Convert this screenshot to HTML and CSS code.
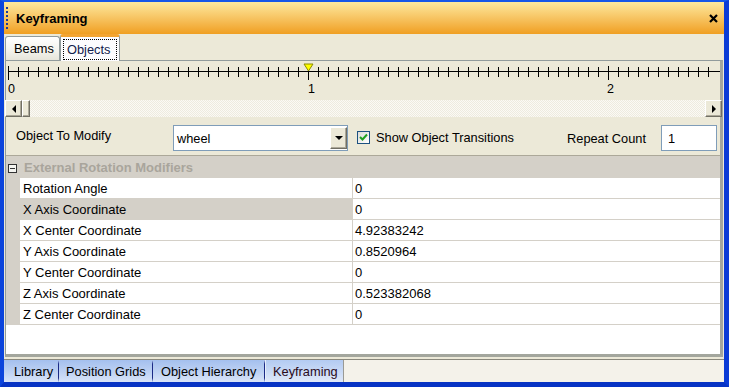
FILE: index.html
```html
<!DOCTYPE html>
<html lang="en">
<head>
  <meta charset="UTF-8">
  <meta name="viewport" content="width=device-width, initial-scale=1.0">
  <title>Keyframing</title>
  <link rel="stylesheet" href="styles.css">
</head>
<body>
  <div class="window">
    <div class="titlebar">
      <span class="grip"></span>
      <span class="title">Keyframing</span>
      <svg class="close" width="9" height="9" viewBox="0 0 9 9"><path d="M1 1 L8 8 M8 1 L1 8" stroke="#000" stroke-width="2.2"/></svg>
    </div>

    <div class="body">
      <div class="tabs">
        <div class="tab">Beams</div>
        <div class="tab active"><span class="focus">Objects</span></div>
      </div>

      <div class="page">
        <!-- timeline ruler -->
        <svg class="ruler" width="714" height="39" viewBox="0 0 714 39" shape-rendering="crispEdges">
          <defs>
            <pattern id="tick" x="2" y="6" width="10" height="10" patternUnits="userSpaceOnUse">
              <rect x="0" y="0" width="1" height="10" fill="#000"/>
            </pattern>
          </defs>
          <rect x="2" y="10" width="712" height="1" fill="#000"/>
          <rect x="2" y="6" width="701" height="10" fill="url(#tick)"/>
          <rect x="2" y="5" width="1" height="14" fill="#000"/>
          <rect x="302" y="5" width="1" height="14" fill="#000"/>
          <rect x="602" y="5" width="1" height="14" fill="#000"/>
          <text class="rlabel" x="2" y="32">0</text>
          <text class="rlabel" x="302" y="32">1</text>
          <text class="rlabel" x="601" y="32">2</text>
          <polygon points="298,3 307,3 302.5,10" fill="#ffff00" stroke="#8a8a00" stroke-width="1" shape-rendering="auto"/>
        </svg>

        <div class="hscroll">
          <div class="sbtn"><span class="arrow-left"></span></div>
          <div class="thumb"></div>
          <div class="track"></div>
          <div class="sbtn"><span class="arrow-right"></span></div>
        </div>

        <div class="options">
          <span class="opt-label">Object To Modify</span>
          <div class="combo">
            <span class="combo-text">wheel</span>
            <span class="combo-btn"><span class="arrow-down"></span></span>
          </div>
          <label class="check">
            <span class="box">
              <svg width="9" height="9" viewBox="0 0 9 9"><path d="M1 4 L3.5 6.5 L8 1.5" fill="none" stroke="#21a121" stroke-width="2"/></svg>
            </span>
            Show Object Transitions
          </label>
          <span class="repeat-label">Repeat Count</span>
          <div class="textbox">1</div>
        </div>

        <div class="grid">
          <div class="category">
            <span class="toggle"></span>
            <span class="cat-text">External Rotation Modifiers</span>
          </div>
          <div class="row"><span class="margin"></span><span class="name">Rotation Angle</span><span class="value">0</span></div>
          <div class="row"><span class="margin"></span><span class="name selected">X Axis Coordinate</span><span class="value">0</span></div>
          <div class="row"><span class="margin"></span><span class="name">X Center Coordinate</span><span class="value">4.92383242</span></div>
          <div class="row"><span class="margin"></span><span class="name">Y Axis Coordinate</span><span class="value">0.8520964</span></div>
          <div class="row"><span class="margin"></span><span class="name">Y Center Coordinate</span><span class="value">0</span></div>
          <div class="row"><span class="margin"></span><span class="name">Z Axis Coordinate</span><span class="value">0.523382068</span></div>
          <div class="row"><span class="margin"></span><span class="name">Z Center Coordinate</span><span class="value">0</span></div>
          <div class="filler"></div>
        </div>
      </div>

      <div class="bottombar">
        <div class="btab lib">Library</div>
        <span class="sep"></span>
        <div class="btab grids">Position Grids</div>
        <span class="sep"></span>
        <div class="btab hier">Object Hierarchy</div>
        <span class="sep"></span>
        <div class="btab key">Keyframing</div>
      </div>
    </div>
  </div>
</body>
</html>
```

FILE: styles.css
```css
html, body {
  margin: 0;
  padding: 0;
}

body {
  font-family: "Liberation Sans", Arial, sans-serif;
  font-size: 12.8px;
  color: #000;
  background: #0a40dc;
}

.window {
  width: 729px;
  height: 387px;
  box-sizing: border-box;
  border-style: solid;
  border-width: 2px 5px 5px 4px;
  border-color: #1657e8 #0a3bd6 #0733c4 #0b44dc;
  display: flex;
  flex-direction: column;
}

/* title bar */
.titlebar {
  height: 32px;
  display: flex;
  align-items: center;
  background: linear-gradient(#fde99e, #f7c462 50%, #f09f22);
}

.grip {
  width: 0;
  height: 22px;
  margin-left: 2px;
  border-left: 2px dotted #1d3a94;
}

.title {
  flex: 1;
  margin-left: 8px;
  font-weight: bold;
  font-size: 13px;
}

.close {
  margin-right: 6px;
  margin-top: 1px;
}

.body {
  flex: 1;
  background: #ece9d8;
  display: flex;
  flex-direction: column;
}

/* top tabs */
.tabs {
  height: 26px;
  display: flex;
  align-items: flex-end;
  padding-left: 1px;
}

.tab {
  box-sizing: border-box;
  width: 55px;
  height: 24px;
  padding: 4px 0 0 8px;
  border: 1px solid #919b9c;
  border-bottom: none;
  border-radius: 3px 3px 0 0;
  background: linear-gradient(#ffffff, #f3f2ec 60%, #e6e4da);
}

.tab.active {
  width: 60px;
  height: 27px;
  margin-bottom: -1px;
  padding: 2px 0 0 2px;
  border-top: 3px solid #f3a532;
  background: #fcfcfe;
  position: relative;
  z-index: 1;
  color: #10204c;
}

.focus {
  display: block;
  width: 54px;
  height: 21px;
  box-sizing: border-box;
  padding: 2px 0 0 3px;
  border: 1px dotted #000;
}

/* tab page */
.page {
  width: 718px;
  height: 297px;
  box-sizing: border-box;
  margin-left: 1px;
  border: 1px solid #919b9c;
  border-right: 3px solid #a3a69d;
  border-bottom: 3px solid #a3a69d;
  display: flex;
  flex-direction: column;
}

.ruler {
  display: block;
  height: 39px;
}

.rlabel {
  font-family: "Liberation Sans", Arial, sans-serif;
  font-size: 12.5px;
  fill: #000;
}

.hscroll {
  height: 17px;
  margin: 0 -2px 0 -1px;
  display: flex;
}

.sbtn, .thumb {
  box-sizing: border-box;
  width: 17px;
  height: 17px;
  background: #ece9d8;
  border: 1px solid;
  border-color: #fff #716f64 #716f64 #fff;
  box-shadow: inset -1px -1px 0 #aca899;
  display: flex;
  align-items: center;
  justify-content: center;
}

.thumb {
  width: 8px;
}

.track {
  flex: 1;
  background: repeating-conic-gradient(#fbfaf5 0 25%, #eeebdf 0 50%) 0 0 / 2px 2px;
}

.arrow-left {
  border-right: 4px solid #000;
  border-top: 4px solid transparent;
  border-bottom: 4px solid transparent;
}

.arrow-right {
  border-left: 4px solid #000;
  border-top: 4px solid transparent;
  border-bottom: 4px solid transparent;
}

.arrow-down {
  border-top: 4px solid #000;
  border-left: 4px solid transparent;
  border-right: 4px solid transparent;
}

/* options row */
.options {
  height: 38px;
  box-sizing: border-box;
  padding: 4px 3px 0 10px;
  display: flex;
  align-items: center;
}

.opt-label {
  width: 157px;
  margin-top: -5px;
}

.combo {
  box-sizing: border-box;
  width: 175px;
  height: 26px;
  border: 1px solid #7f9db9;
  background: #fff;
  display: flex;
  align-items: center;
  padding: 1px 0 1px 3px;
}

.combo-text {
  flex: 1;
}

.combo-btn {
  box-sizing: border-box;
  width: 17px;
  height: 22px;
  background: #ece9d8;
  border: 1px solid;
  border-color: #fff #716f64 #716f64 #fff;
  box-shadow: inset -1px -1px 0 #aca899;
  display: flex;
  align-items: center;
  justify-content: center;
}

.check {
  margin-left: 9px;
  display: flex;
  align-items: center;
  gap: 6px;
  margin-top: -2px;
}

.box {
  box-sizing: border-box;
  width: 13px;
  height: 13px;
  border: 1px solid #1c5180;
  background: linear-gradient(135deg, #dcdcd7, #fff);
  display: flex;
  align-items: center;
  justify-content: center;
}

.repeat-label {
  margin-left: auto;
  margin-right: 15px;
  margin-top: 1px;
}

.textbox {
  box-sizing: border-box;
  width: 56px;
  height: 26px;
  border: 1px solid #7f9db9;
  background: #fff;
  padding: 5px 0 0 6px;
}

/* property grid */
.grid {
  flex: 1;
  border-top: 1px solid #aca899;
  background: #fff;
  display: flex;
  flex-direction: column;
  font-size: 13px;
}

.category {
  height: 22px;
  background: #d4d0c8;
  display: flex;
  align-items: center;
}

.toggle {
  box-sizing: border-box;
  width: 9px;
  height: 9px;
  margin: 2px 0 0 2px;
  border: 1px solid #333;
  background: linear-gradient(#333, #333) center / 5px 1px no-repeat, #f4f4f0;
}

.cat-text {
  margin-left: 7px;
  font-weight: bold;
  color: #a9a59c;
}

.row {
  height: 21px;
  display: flex;
}

.row .margin {
  width: 14px;
  background: #d4d0c8;
}

.name, .value {
  box-sizing: border-box;
  height: 21px;
  line-height: 20px;
  padding: 1px 0 0 3px;
  border-bottom: 1px solid #d4d0c8;
}

.name {
  width: 333px;
  border-right: 1px solid #d4d0c8;
}

.name.selected {
  background: #d4d0c8;
}

.value {
  flex: 1;
  padding-left: 2px;
}

.filler {
  flex: 1;
}

/* bottom dock tabs */
.bottombar {
  height: 22px;
  margin-top: 2px;
  border-top: 1px solid #8a887c;
  background: #f4f2ea;
  display: flex;
  align-items: center;
}

.btab {
  box-sizing: border-box;
  height: 22px;
  line-height: 23px;
  background: linear-gradient(#a4c0ee, #bcd0f3 50%, #d8e4f8);
  white-space: nowrap;
}

.lib { width: 54px; padding-left: 10px; }
.grids { width: 93px; padding-left: 7px; }
.hier { width: 111px; padding-left: 8px; }

.key {
  width: 79px;
  padding-left: 7px;
  border-left: 1px solid #e6eefb;
  border-right: 1px solid #9a9a94;
  background: linear-gradient(#b3cbf2, #c8d9f5 50%, #e0e9f9);
  color: #2a0a1a;
}

.sep {
  width: 1px;
  height: 22px;
  background: linear-gradient(#bcd0f3, #1b2a86 18%, #1b2a86 82%, #c8d9f5);
}
```
